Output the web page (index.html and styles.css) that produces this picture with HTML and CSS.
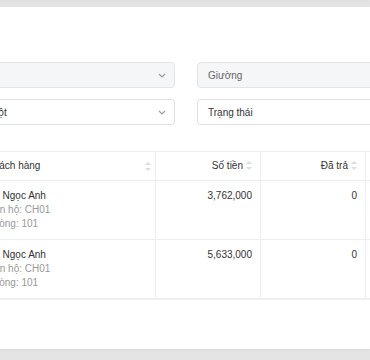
FILE: index.html
```html
<!DOCTYPE html>
<html lang="vi">
<head>
    <meta charset="UTF-8">
    <meta name="viewport" content="width=device-width, initial-scale=1.0">
    <title>Công nợ</title>
    <link rel="stylesheet" href="styles.css">
</head>
<body>
    <div class="topbar"></div>
    <div class="panel">
        <div class="content">
            <div class="filters">
                <div class="select disabled">
                    <span class="select-text"></span>
                    <svg class="chevron" width="8" height="5" viewBox="0 0 8 5"><path d="M1 1 L4 4 L7 1" fill="none" stroke="#999" stroke-width="1.1"/></svg>
                </div>
                <div class="select disabled">
                    <span class="select-text muted">Giường</span>
                    <svg class="chevron" width="8" height="5" viewBox="0 0 8 5"><path d="M1 1 L4 4 L7 1" fill="none" stroke="#999" stroke-width="1.1"/></svg>
                </div>
                <div class="select">
                    <span class="select-text">Một</span>
                    <svg class="chevron" width="8" height="5" viewBox="0 0 8 5"><path d="M1 1 L4 4 L7 1" fill="none" stroke="#999" stroke-width="1.1"/></svg>
                </div>
                <div class="select">
                    <span class="select-text">Trạng thái</span>
                    <svg class="chevron" width="8" height="5" viewBox="0 0 8 5"><path d="M1 1 L4 4 L7 1" fill="none" stroke="#999" stroke-width="1.1"/></svg>
                </div>
            </div>

            <table class="debt-table">
                <thead>
                    <tr>
                        <th class="col-customer">
                            <div class="th-inner">
                                <span>Khách hàng</span>
                                <span class="sort"></span>
                            </div>
                        </th>
                        <th class="col-num">Số tiền<span class="sort"></span></th>
                        <th class="col-num">Đã trả<span class="sort"></span></th>
                        <th class="col-rest">Còn nợ</th>
                    </tr>
                </thead>
                <tbody>
                    <tr>
                        <td>
                            <div class="name">Đỗ Ngọc Anh</div>
                            <div class="sub">Căn hộ: CH01</div>
                            <div class="sub">Phòng: 101</div>
                        </td>
                        <td class="num">3,762,000</td>
                        <td class="num">0</td>
                        <td class="num">3,762,000</td>
                    </tr>
                    <tr>
                        <td>
                            <div class="name">Đỗ Ngọc Anh</div>
                            <div class="sub">Căn hộ: CH01</div>
                            <div class="sub">Phòng: 101</div>
                        </td>
                        <td class="num">5,633,000</td>
                        <td class="num">0</td>
                        <td class="num">5,633,000</td>
                    </tr>
                </tbody>
            </table>
        </div>
    </div>
    <div class="bottombar"></div>
</body>
</html>
```

FILE: styles.css
```css
body {
    font-family: "Liberation Sans", Arial, sans-serif;
    font-size: 10px;
    color: #333;
    margin: 0;
    padding: 0;
    background-color: #e4e4e4;
    overflow: hidden;
}

.topbar {
    height: 7px;
    background: linear-gradient(#e1e1e1, #e6e6e6);
}

.panel {
    height: 342px;
    background-color: #fff;
    overflow: hidden;
    box-shadow: 0 1px 2px rgba(0, 0, 0, 0.06);
}

.bottombar {
    height: 11px;
}

.content {
    margin-left: -21px;
    padding-top: 55px;
    width: 560px;
}

/* filters */
.filters {
    display: grid;
    grid-template-columns: 196px 196px;
    column-gap: 22px;
    row-gap: 11px;
}

.select {
    height: 24px;
    border: 1px solid #dcdfe6;
    border-radius: 4px;
    background-color: #fff;
    display: flex;
    align-items: center;
    justify-content: space-between;
    padding: 0 8px 0 10px;
}

.select.disabled {
    background-color: #f5f6f7;
    border-color: #e2e4e8;
}

.select-text {
    color: #333;
}

.select-text.muted {
    color: #666;
}

.chevron {
    display: block;
}

/* table */
.debt-table {
    margin-top: 26px;
    border-collapse: collapse;
    table-layout: fixed;
    width: 500px;
}

.debt-table th,
.debt-table td {
    padding: 7px 8px;
    line-height: 14px;
    border-right: 1px solid #ebeef5;
    border-bottom: 1px solid #ebeef5;
    font-weight: normal;
    vertical-align: top;
}

.debt-table thead tr {
    border-top: 1px solid #ebeef5;
}

.debt-table th {
    text-align: left;
    color: #333;
}

.col-customer {
    width: 160px;
}

.debt-table th.col-num {
    width: 88px;
    text-align: right;
}

.th-inner {
    display: flex;
    justify-content: space-between;
    align-items: center;
    margin-right: -4px;
}

.sort {
    display: inline-block;
    width: 6px;
    height: 9px;
    margin-left: 3px;
    vertical-align: -1px;
    position: relative;
}

.sort::before,
.sort::after {
    content: "";
    position: absolute;
    left: 0;
    border-left: 3px solid transparent;
    border-right: 3px solid transparent;
}

.sort::before {
    top: 0;
    border-bottom: 3.5px solid #dcdee3;
}

.sort::after {
    bottom: 0;
    border-top: 3.5px solid #dcdee3;
}

.debt-table td {
    padding-top: 8px;
    padding-bottom: 8px;
    height: 42px;
}

.debt-table tbody tr:last-child td {
    border-bottom: 2px solid #eef0f4;
}

.num {
    text-align: right;
}

.name {
    color: #333;
}

.sub {
    color: #999;
}
```
